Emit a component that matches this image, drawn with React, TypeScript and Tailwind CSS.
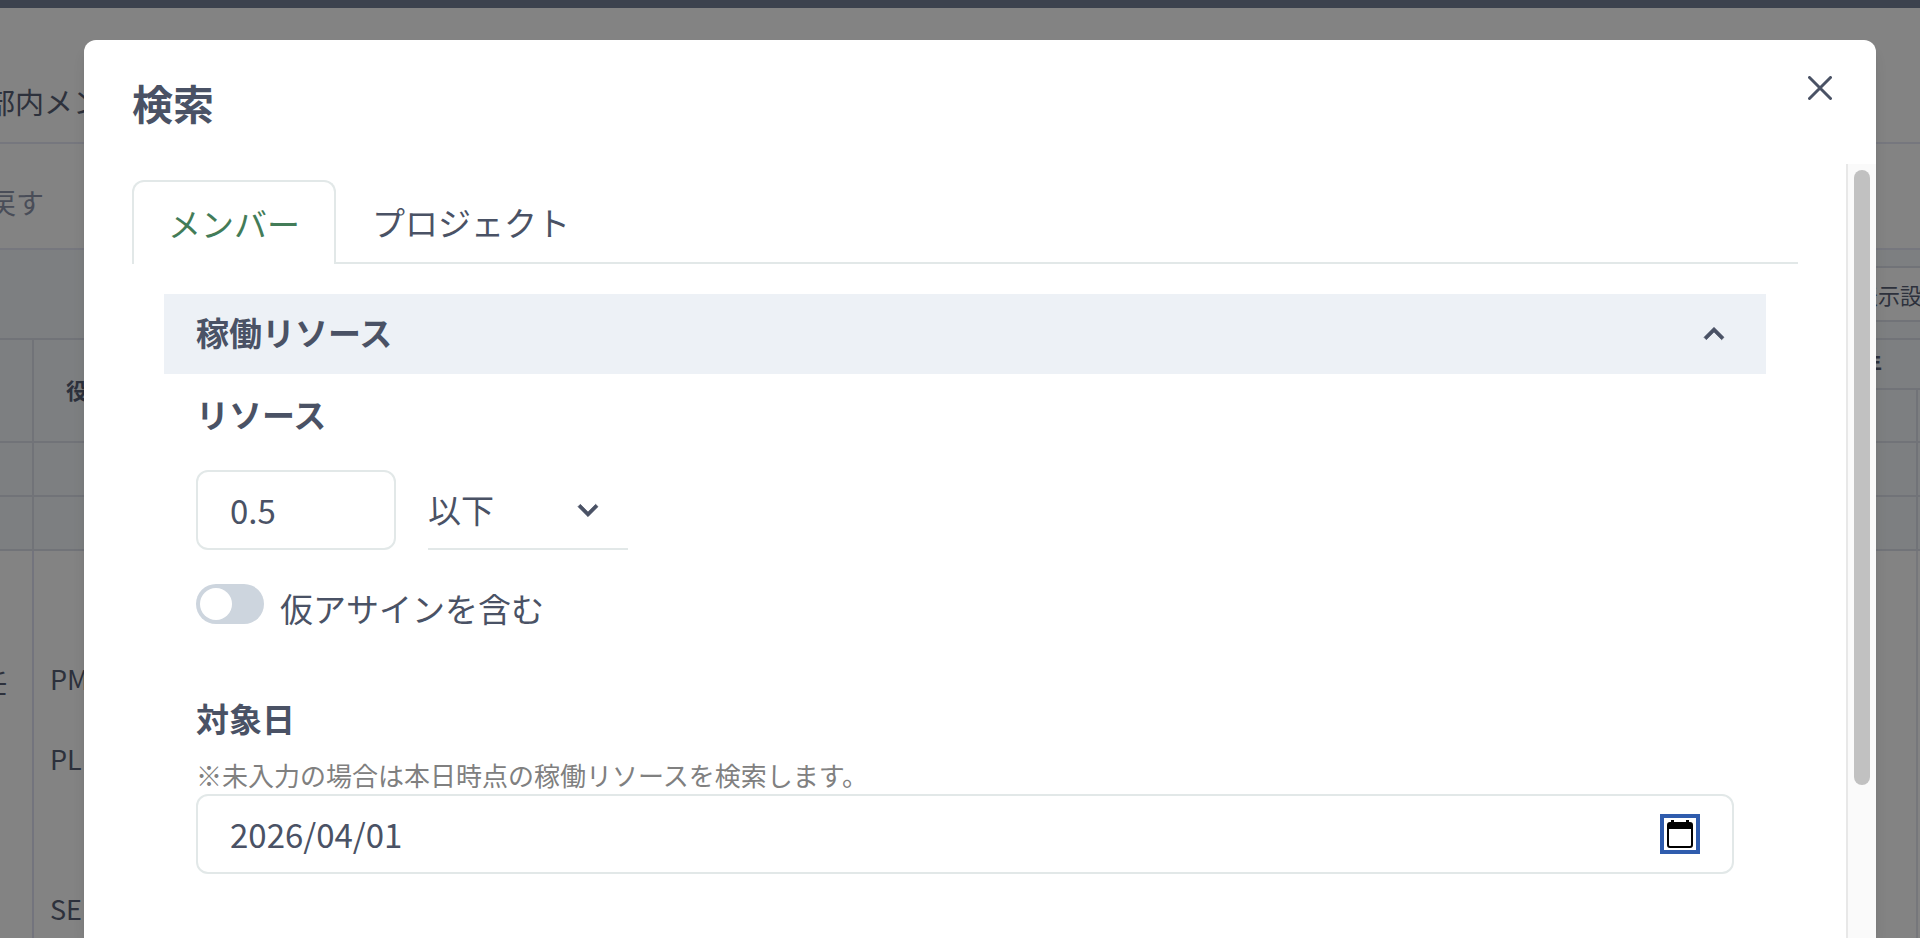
import clsx from "clsx";
import { useState } from "react";

const roles = ["PM", "PL", "SE"];

function Chevron({ className }: { className?: string }) {
    return (
        <svg
            viewBox="0 0 24 24"
            fill="currentColor"
            stroke="currentColor"
            strokeWidth="0.4"
            className={clsx("size-10", className)}
        >
            <path d="M16.59 8.59L12 13.17 7.41 8.59 6 10l6 6 6-6z" />
        </svg>
    );
}

function GridRow() {
    return (
        <div className="flex h-[54px] shrink-0 border-b-2 border-[#717378] bg-[#7d7f81]">
            <div className="w-[34px] border-r-2 border-[#717378]" />
            <div className="ml-auto w-1 border-l-2 border-[#717378]" />
        </div>
    );
}

function Backdrop() {
    return (
        <div className="absolute inset-0 flex flex-col overflow-hidden bg-[#838383] text-[#2d313c]">
            <div className="h-2 shrink-0 bg-[#3c424e]" />
            <div className="flex h-[136px] shrink-0 items-center border-b-2 border-[#76777e] pt-13 text-[29px] leading-none">
                <span className="-ml-3.5">部内メン</span>
            </div>
            <div className="flex h-[106px] shrink-0 items-center border-b-2 border-[#76777e] pt-3 text-[28px] leading-none text-[#494d58]">
                <span className="-ml-3">戻す</span>
            </div>
            <div className="flex h-[88px] shrink-0 items-center justify-end bg-[#7d7f81]">
                <button className="-mr-10 h-14 rounded-lg border-2 border-[#717378] bg-[#838383] px-3.5 text-[22px]">
                    表示設定
                </button>
            </div>
            <div className="flex h-[105px] shrink-0 border-y-2 border-[#717378] bg-[#7d7f81] text-[22px] font-bold">
                <div className="w-[34px] border-r-2 border-[#717378]" />
                <div className="flex items-center pb-1 pl-8 leading-none">
                    役割
                </div>
                <div className="ml-auto flex w-[60px] flex-col">
                    <div className="flex h-[50px] items-center border-b-2 border-[#717378] pb-1">
                        年
                    </div>
                    <div className="ml-auto w-1 flex-1 border-l-2 border-[#717378]" />
                </div>
            </div>
            <GridRow />
            <GridRow />
            <div className="flex flex-1 text-[27px]">
                <div className="w-[34px] shrink-0 border-r-2 border-[#73747d] pt-[108px]">
                    <span className="-ml-5">任</span>
                </div>
                <div className="flex flex-col pt-[104px] pl-4">
                    {roles.map((role) => (
                        <div
                            key={role}
                            className={role === "PL" ? "h-[150px]" : "h-20"}
                        >
                            {role}
                        </div>
                    ))}
                </div>
                <div className="ml-auto w-1 border-l-2 border-[#76777b]" />
            </div>
        </div>
    );
}

function Tabs() {
    const [tab, setTab] = useState("メンバー");

    return (
        <div role="tablist" className="flex">
            {["メンバー", "プロジェクト"].map((name) => (
                <button
                    key={name}
                    role="tab"
                    aria-selected={tab === name}
                    onClick={() => setTab(name)}
                    className={clsx(
                        "h-[84px] border-[#e2e8e8]",
                        tab === name
                            ? "rounded-t-xl border-2 border-b-0 px-[34px] text-[#437c58]"
                            : "border-b-2 px-9 pt-0.5",
                    )}
                >
                    {name}
                </button>
            ))}
            <div className="flex-1 border-b-2 border-[#e2e8e8]" />
        </div>
    );
}

function ResourceForm() {
    const [resource, setResource] = useState("0.5");
    const [includeTemporary, setIncludeTemporary] = useState(false);
    const [date, setDate] = useState("2026/04/01");

    return (
        <div className="px-8">
            <label htmlFor="resource" className="block pt-4 font-bold">
                リソース
            </label>
            <div className="mt-8 flex gap-8">
                <input
                    id="resource"
                    value={resource}
                    onChange={(e) => setResource(e.target.value)}
                    className="h-20 w-[200px] rounded-xl border-2 border-[#e2e8e8] px-8"
                />
                <div className="relative">
                    <select
                        aria-label="条件"
                        className="h-20 w-[200px] appearance-none border-b-2 border-[#e2e8e8] bg-transparent"
                    >
                        <option>以下</option>
                        <option>以上</option>
                    </select>
                    <Chevron className="pointer-events-none absolute top-5 right-5" />
                </div>
            </div>
            <label className="mt-[34px] flex items-start gap-4">
                <input
                    type="checkbox"
                    role="switch"
                    checked={includeTemporary}
                    onChange={(e) => setIncludeTemporary(e.target.checked)}
                    className="peer sr-only"
                />
                <span className="flex h-10 w-[68px] rounded-full bg-[#cdd5de] p-1 peer-checked:justify-end peer-checked:bg-[#437c58]">
                    <span className="size-8 rounded-full bg-white" />
                </span>
                仮アサインを含む
            </label>
            <label htmlFor="date" className="mt-[62px] block font-bold">
                対象日
            </label>
            <p className="mt-3.5 text-[26px] leading-[38px] text-[#808080]">
                ※未入力の場合は本日時点の稼働リソースを検索します。
            </p>
            <div className="flex h-20 items-center rounded-xl border-2 border-[#e2e8e8] px-8">
                <input
                    id="date"
                    value={date}
                    onChange={(e) => setDate(e.target.value)}
                    className="min-w-0 flex-1 outline-none"
                />
                <button
                    aria-label="カレンダーを開く"
                    className="flex size-10 items-center justify-center border-4 border-[#2f5cad] text-black"
                >
                    <svg viewBox="0 0 26 28" className="h-7 w-[26px]">
                        <path
                            fill="currentColor"
                            fillRule="evenodd"
                            d="M4 0h3v2h12V0h3v2h1a3 3 0 0 1 3 3v20a3 3 0 0 1-3 3H3a3 3 0 0 1-3-3V5a3 3 0 0 1 3-3h1zM2 9v16a1 1 0 0 0 1 1h20a1 1 0 0 0 1-1V9z"
                        />
                    </svg>
                </button>
            </div>
        </div>
    );
}

export default function App() {
    const [open, setOpen] = useState(true);

    return (
        <div className="relative flex h-screen flex-col overflow-hidden px-11 pt-10 pl-[84px] font-['Noto_Sans_CJK_JP',sans-serif] text-[33px] leading-12 text-[#4a5265]">
            <Backdrop />
            {open && (
                <div
                    role="dialog"
                    aria-labelledby="title"
                    className="relative flex min-h-0 flex-1 flex-col rounded-t-xl bg-white shadow-lg"
                >
                    <header className="flex h-[124px] shrink-0 items-start justify-between pr-10 pl-12">
                        <h2
                            id="title"
                            className="pt-[30px] text-[41px] leading-16 font-bold"
                        >
                            検索
                        </h2>
                        <button
                            aria-label="閉じる"
                            onClick={() => setOpen(false)}
                            className="mt-8 flex size-8 items-center justify-center"
                        >
                            <svg
                                viewBox="0 0 24 24"
                                className="size-6"
                                fill="none"
                                stroke="currentColor"
                                strokeWidth="3"
                                strokeLinecap="round"
                            >
                                <path d="M1.5 1.5l21 21M22.5 1.5l-21 21" />
                            </svg>
                        </button>
                    </header>
                    <div className="flex min-h-0 flex-1">
                        <div className="min-w-0 flex-1 overflow-hidden px-12 pt-4">
                            <Tabs />
                            <section className="px-8 pt-[30px]">
                                <button className="flex h-20 w-full items-center justify-between bg-[#edf1f6] px-8 font-bold">
                                    <span className="pb-1">稼働リソース</span>
                                    <Chevron className="rotate-180" />
                                </button>
                                <ResourceForm />
                            </section>
                        </div>
                        <div className="w-[30px] border-l-2 border-[#e8e8e8] bg-[#fafafa] pt-[6px] pl-[6px]">
                            <div className="h-[615px] w-4 rounded-full bg-[#c1c1c1]" />
                        </div>
                    </div>
                </div>
            )}
        </div>
    );
}
